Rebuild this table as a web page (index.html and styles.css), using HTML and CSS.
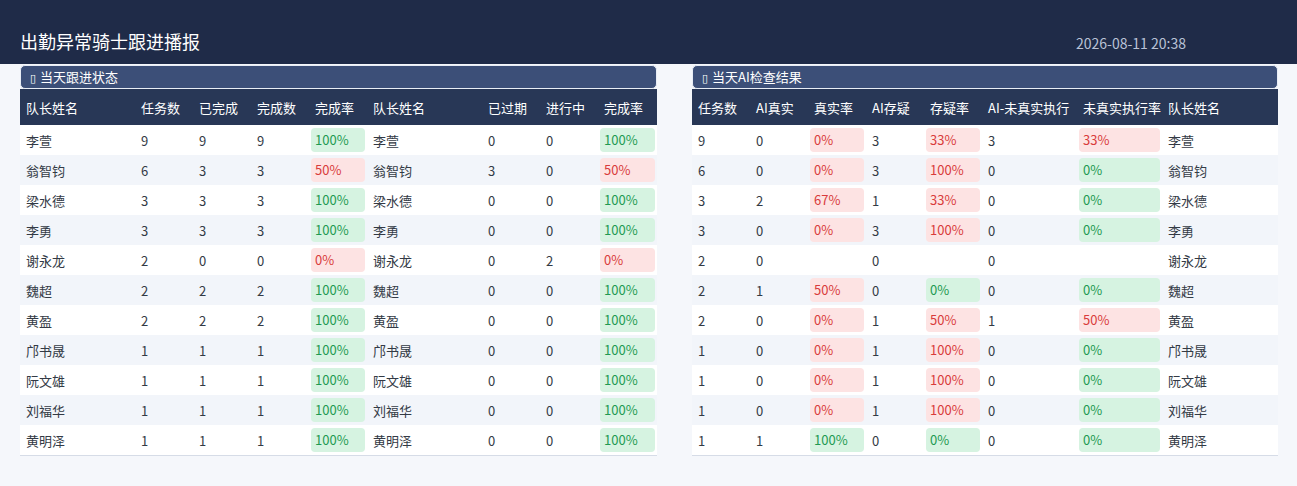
FILE: index.html
```html
<!DOCTYPE html>
<html lang="zh-CN">
<head>
<meta charset="utf-8">
<title>出勤异常骑士跟进播报</title>
<link rel="stylesheet" href="styles.css">
</head>
<body>
<header class="topbar">
  <h1 class="title">出勤异常骑士跟进播报</h1>
  <div class="date">2026-08-11 20:38</div>
</header>
<main class="panels">
  <section class="panel panel-left">
    <div class="panel-title"><span class="tofu">▯</span> 当天跟进状态</div>
    <table class="grid">
      <colgroup>
        <col class="w115"><col class="w58"><col class="w58"><col class="w58"><col class="w58"><col class="w115"><col class="w58"><col class="w58"><col class="w59">
      </colgroup>
      <thead>
        <tr><th>队长姓名</th><th>任务数</th><th>已完成</th><th>完成数</th><th>完成率</th><th>队长姓名</th><th>已过期</th><th>进行中</th><th>完成率</th></tr>
      </thead>
      <tbody>
        <tr><td>李萱</td><td>9</td><td>9</td><td>9</td><td class="bc"><span class="badge good">100%</span></td><td>李萱</td><td>0</td><td>0</td><td class="bc"><span class="badge good">100%</span></td></tr>
        <tr><td>翁智钧</td><td>6</td><td>3</td><td>3</td><td class="bc"><span class="badge bad">50%</span></td><td>翁智钧</td><td>3</td><td>0</td><td class="bc"><span class="badge bad">50%</span></td></tr>
        <tr><td>梁水德</td><td>3</td><td>3</td><td>3</td><td class="bc"><span class="badge good">100%</span></td><td>梁水德</td><td>0</td><td>0</td><td class="bc"><span class="badge good">100%</span></td></tr>
        <tr><td>李勇</td><td>3</td><td>3</td><td>3</td><td class="bc"><span class="badge good">100%</span></td><td>李勇</td><td>0</td><td>0</td><td class="bc"><span class="badge good">100%</span></td></tr>
        <tr><td>谢永龙</td><td>2</td><td>0</td><td>0</td><td class="bc"><span class="badge bad">0%</span></td><td>谢永龙</td><td>0</td><td>2</td><td class="bc"><span class="badge bad">0%</span></td></tr>
        <tr><td>魏超</td><td>2</td><td>2</td><td>2</td><td class="bc"><span class="badge good">100%</span></td><td>魏超</td><td>0</td><td>0</td><td class="bc"><span class="badge good">100%</span></td></tr>
        <tr><td>黄盈</td><td>2</td><td>2</td><td>2</td><td class="bc"><span class="badge good">100%</span></td><td>黄盈</td><td>0</td><td>0</td><td class="bc"><span class="badge good">100%</span></td></tr>
        <tr><td>邝书晟</td><td>1</td><td>1</td><td>1</td><td class="bc"><span class="badge good">100%</span></td><td>邝书晟</td><td>0</td><td>0</td><td class="bc"><span class="badge good">100%</span></td></tr>
        <tr><td>阮文雄</td><td>1</td><td>1</td><td>1</td><td class="bc"><span class="badge good">100%</span></td><td>阮文雄</td><td>0</td><td>0</td><td class="bc"><span class="badge good">100%</span></td></tr>
        <tr><td>刘福华</td><td>1</td><td>1</td><td>1</td><td class="bc"><span class="badge good">100%</span></td><td>刘福华</td><td>0</td><td>0</td><td class="bc"><span class="badge good">100%</span></td></tr>
        <tr><td>黄明泽</td><td>1</td><td>1</td><td>1</td><td class="bc"><span class="badge good">100%</span></td><td>黄明泽</td><td>0</td><td>0</td><td class="bc"><span class="badge good">100%</span></td></tr>
      </tbody>
    </table>
  </section>
  <section class="panel panel-right">
    <div class="panel-title"><span class="tofu">▯</span> 当天AI检查结果</div>
    <table class="grid">
      <colgroup>
        <col class="w58"><col class="w58"><col class="w58"><col class="w58"><col class="w58"><col class="w95"><col class="w85"><col class="w116">
      </colgroup>
      <thead>
        <tr><th>任务数</th><th>AI真实</th><th>真实率</th><th>AI存疑</th><th>存疑率</th><th>AI-未真实执行</th><th>未真实执行率</th><th>队长姓名</th></tr>
      </thead>
      <tbody>
        <tr><td>9</td><td>0</td><td class="bc"><span class="badge bad">0%</span></td><td>3</td><td class="bc"><span class="badge bad">33%</span></td><td>3</td><td class="bc"><span class="badge bad">33%</span></td><td>李萱</td></tr>
        <tr><td>6</td><td>0</td><td class="bc"><span class="badge bad">0%</span></td><td>3</td><td class="bc"><span class="badge bad">100%</span></td><td>0</td><td class="bc"><span class="badge good">0%</span></td><td>翁智钧</td></tr>
        <tr><td>3</td><td>2</td><td class="bc"><span class="badge bad">67%</span></td><td>1</td><td class="bc"><span class="badge bad">33%</span></td><td>0</td><td class="bc"><span class="badge good">0%</span></td><td>梁水德</td></tr>
        <tr><td>3</td><td>0</td><td class="bc"><span class="badge bad">0%</span></td><td>3</td><td class="bc"><span class="badge bad">100%</span></td><td>0</td><td class="bc"><span class="badge good">0%</span></td><td>李勇</td></tr>
        <tr><td>2</td><td>0</td><td class="bc"></td><td>0</td><td class="bc"></td><td>0</td><td class="bc"></td><td>谢永龙</td></tr>
        <tr><td>2</td><td>1</td><td class="bc"><span class="badge bad">50%</span></td><td>0</td><td class="bc"><span class="badge good">0%</span></td><td>0</td><td class="bc"><span class="badge good">0%</span></td><td>魏超</td></tr>
        <tr><td>2</td><td>0</td><td class="bc"><span class="badge bad">0%</span></td><td>1</td><td class="bc"><span class="badge bad">50%</span></td><td>1</td><td class="bc"><span class="badge bad">50%</span></td><td>黄盈</td></tr>
        <tr><td>1</td><td>0</td><td class="bc"><span class="badge bad">0%</span></td><td>1</td><td class="bc"><span class="badge bad">100%</span></td><td>0</td><td class="bc"><span class="badge good">0%</span></td><td>邝书晟</td></tr>
        <tr><td>1</td><td>0</td><td class="bc"><span class="badge bad">0%</span></td><td>1</td><td class="bc"><span class="badge bad">100%</span></td><td>0</td><td class="bc"><span class="badge good">0%</span></td><td>阮文雄</td></tr>
        <tr><td>1</td><td>0</td><td class="bc"><span class="badge bad">0%</span></td><td>1</td><td class="bc"><span class="badge bad">100%</span></td><td>0</td><td class="bc"><span class="badge good">0%</span></td><td>刘福华</td></tr>
        <tr><td>1</td><td>1</td><td class="bc"><span class="badge good">100%</span></td><td>0</td><td class="bc"><span class="badge good">0%</span></td><td>0</td><td class="bc"><span class="badge good">0%</span></td><td>黄明泽</td></tr>
      </tbody>
    </table>
  </section>
</main>
</body>
</html>
```
FILE: styles.css
```css
* { box-sizing: border-box; }
html, body { margin: 0; padding: 0; }
body {
  background: #f5f7fb;
  font-family: "Noto Sans CJK SC", "Noto Sans", sans-serif;
  color: #333a45;
  width: 1297px;
  height: 486px;
  overflow: hidden;
}
.topbar {
  height: 64px;
  background: #1f2b48;
  display: flex;
  align-items: flex-end;
  justify-content: space-between;
  padding: 0 111px 10px 20px;
}
.title {
  margin: 0;
  font-size: 18px;
  font-weight: normal;
  color: #ffffff;
  line-height: 26px;
}
.date {
  font-size: 14px;
  color: #b9c2d6;
  line-height: 20px;
  margin-bottom: 1px;
}
.panels {
  display: flex;
  gap: 35px;
  padding: 1px 20px 0 20px;
}
.panel-left { width: 637px; }
.panel-right { width: 586px; }
.panel-title {
  height: 24px;
  background: #3c4f78;
  border: 1px solid #e8edf5;
  border-radius: 5px;
  color: #ffffff;
  font-size: 13px;
  line-height: 22px;
  padding-left: 9px;
}
.tofu {
  font-family: "DejaVu Sans", sans-serif;
  font-size: 11px;
  margin-right: 1px;
}
.grid {
  width: 100%;
  border-collapse: collapse;
  table-layout: fixed;
  font-size: 13px;
  border-bottom: 1px solid #d6dce7;
}
.w58 { width: 58px; }
.w59 { width: 59px; }
.w85 { width: 85px; }
.w95 { width: 95px; }
.w115 { width: 115px; }
.w116 { width: 116px; }
.grid th {
  background: #283756;
  color: #ffffff;
  font-weight: normal;
  text-align: left;
  height: 36px;
  padding: 0 6px;
  white-space: nowrap;
}
.grid td {
  height: 30px;
  padding: 0 6px;
  white-space: nowrap;
}
.grid tbody tr:nth-child(odd) { background: #ffffff; }
.grid tbody tr:nth-child(even) { background: #f2f5fa; }
.grid td.bc { padding: 3px 2px; }
.badge {
  display: block;
  height: 24px;
  line-height: 24px;
  border-radius: 4px;
  padding: 0 4px;
}
.badge.good { background: #d6f3e1; color: #1e9a52; }
.badge.bad { background: #fde3e3; color: #d93b3b; }
```
